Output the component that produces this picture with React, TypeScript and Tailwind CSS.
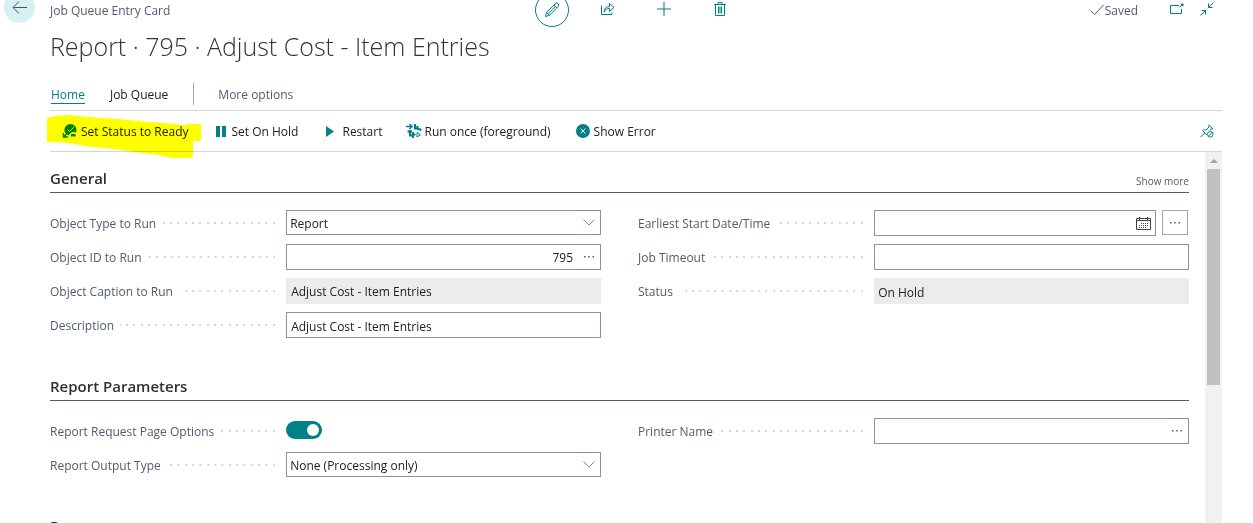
import { useState, type ReactNode } from 'react';

const boxClass = 'w-full h-[26px] border border-[#8a93a3] bg-white text-[#212121] outline-none';

function BackIcon() {
  return (
    <svg viewBox="0 0 16 14" className="w-4 h-[14px]" fill="none" stroke="#44545c" strokeWidth="1">
      <path d="M15 7.500H1.500M7 1.500l-6 6 6 6" />
    </svg>
  );
}

function PencilIcon() {
  return (
    <svg viewBox="0 0 16 16" className="w-4 h-4" fill="none" stroke="#008089" strokeWidth="1">
      <path d="M1.500 14.500l1-4.200L11.300 1.700a1.900 1.900 0 0 1 2.800 2.800L5.500 13.300zM2.500 10.300l3 3M10 3l3 3M4 11.800L11.800 4" />
    </svg>
  );
}

function ShareIcon() {
  return (
    <svg viewBox="0 0 16 14" className="w-4 h-[14px]" fill="none" stroke="#008089" strokeWidth="1">
      <path d="M1.500 3.500v9h10.500v-2" />
      <path d="M4 10c.3-3.600 2.200-5.500 5.500-5.500V1.500L14 5.500l-4.500 4v-3C7 6.500 5.300 7.500 4 10z" />
    </svg>
  );
}

function PlusIcon() {
  return (
    <svg viewBox="0 0 14 14" className="w-[14px] h-[14px]" fill="none" stroke="#008089" strokeWidth="1">
      <path d="M7 0v14M0 7h14" />
    </svg>
  );
}

function TrashIcon() {
  return (
    <svg viewBox="0 0 12 14" className="w-3 h-[14px]" fill="none" stroke="#008089" strokeWidth="1">
      <path d="M0 2.500h12M4 2.500v-2h4v2M1.500 2.500v11h9v-11M4.500 4.500v7M6 4.500v7M7.500 4.500v7" />
    </svg>
  );
}

function CheckIcon() {
  return (
    <svg viewBox="0 0 14 12" className="w-[14px] h-3" fill="none" stroke="#505c6d" strokeWidth="1">
      <path d="M.5 6.500l4 4L13.500 1" />
    </svg>
  );
}

function PopOutIcon() {
  return (
    <svg viewBox="0 0 14 12" className="w-[14px] h-3" fill="none" stroke="#008089" strokeWidth="1">
      <path d="M9 2.500H.5v8h11V6M9.500 4.500L12 2" />
      <path d="M11 1h2v2z" fill="#008089" />
    </svg>
  );
}

function CollapseIcon() {
  return (
    <svg viewBox="0 0 14 14" className="w-[14px] h-[14px]" fill="none" stroke="#008089" strokeWidth="1">
      <path d="M13.500.5L8.500 5.500M8.500 1.500v4h4M.5 13.500l5-5M1.500 8.500h4v4" />
    </svg>
  );
}

function ReadyIcon() {
  return (
    <svg viewBox="0 0 15 14" className="w-[15px] h-[14px]">
      <path d="M8.500 0a6 6 0 0 1 6 6.500c0 1-.3 1.700-.6 2.300-1.700-1.300-4-1-5.400.4L6.500 11.500 3 8.500A6 6 0 0 1 8.500 0z" fill="#008089" />
      <path d="M1.500 9v4H6M2 12.500L6 8.500" fill="none" stroke="#008089" strokeWidth="1.500" />
      <path d="M5.500 5.500l2 2L12 3" fill="none" stroke="#fff" strokeWidth=".8" />
      <path d="M8.500 11c1.700-1.600 3.800-1.600 5.500 0l-1 1.800c-1.200-.8-2.300-.8-3.500 0z" fill="#008089" />
    </svg>
  );
}

function PauseIcon() {
  return (
    <svg viewBox="0 0 10 11" className="w-[10px] h-[11px]" fill="#008089">
      <path d="M0 0h4v11H0zM6 0h4v11H6z" />
    </svg>
  );
}

function PlayIcon() {
  return (
    <svg viewBox="0 0 8 11" className="w-2 h-[11px]" fill="#008089">
      <path d="M0 0l8 5.500L0 11z" />
    </svg>
  );
}

function RunOnceIcon() {
  return (
    <svg viewBox="0 0 16 14" className="w-4 h-[14px]" fill="none" stroke="#008089">
      <path d="M0 2.500h6M3.500 0L6 2.500 3.500 5" strokeWidth="1.500" />
      <path d="M9 0v5.500M8 4.500h3.500V2M11 4.500l4.500 1.500M1.500 7.500H6M4 6v5M3 11.500h3M7 8v6M7 10.500h2.500" strokeWidth="2.200" />
      <path d="M11 8.500v4.500l3.500-2.200z" strokeWidth="1" />
    </svg>
  );
}

function ErrorIcon() {
  return (
    <svg viewBox="0 0 14 14" className="w-[14px] h-[14px]">
      <circle cx="7" cy="7" r="7" fill="#008089" />
      <path d="M4.500 4.500l5 5M9.500 4.500l-5 5" stroke="#fff" strokeWidth="1" />
    </svg>
  );
}

function UnpinIcon() {
  return (
    <svg viewBox="0 0 14 14" className="w-[14px] h-[14px]" fill="none" stroke="#008089" strokeWidth="1">
      <path d="M.5 13L4.500 9M6.500 11L2.500 6.500c1.300-1 2.700-1 3.700-.5L9 3V.8L13 5h-2.200L9.500 6.500" />
      <circle cx="10.300" cy="10.300" r="2.800" />
      <path d="M8.300 12.300l4-4" />
    </svg>
  );
}

function CalendarIcon() {
  return (
    <svg viewBox="0 0 15 13" className="w-[15px] h-[13px]" fill="none" stroke="#3c4452" strokeWidth="1">
      <path d="M.5 1.500h14v11H.5zM.5 3.500h14M3.500 0v3M11.500 0v3" />
      <path d="M5 6.500h8M3 8.500h10M3 10.500h8" strokeDasharray="1 1" />
    </svg>
  );
}

function DotsIcon() {
  return (
    <svg viewBox="0 0 12 2" className="w-3 h-[2px]" fill="#505c6d">
      <path d="M1 0h1.500v1.500H1zM5.200 0h1.500v1.500H5.200zM9.500 0H11v1.500H9.500z" />
    </svg>
  );
}

function Action({ icon, label, className }: { icon: ReactNode; label: string; className: string }) {
  return (
    <button className={`flex items-center whitespace-nowrap text-[#212121] ${className}`}>
      {icon}
      <span className="pt-[2px]">{label}</span>
    </button>
  );
}

function Field({ id, label, children }: { id: string; label: string; children: ReactNode }) {
  return (
    <div className="flex h-[26px]">
      <div className="w-3/7 shrink-0 flex items-center pr-[11px]">
        <label htmlFor={id} className="pt-[2px] whitespace-nowrap text-[#505c6d]">{label}</label>
        <span className="ml-[6px] flex-1 h-[2px] bg-right bg-repeat-x bg-size-[22px_2px] bg-[linear-gradient(90deg,transparent_5px,#d3d5d9_5px,#d3d5d9_7px,transparent_7px,transparent_12px,#d3d5d9_12px,#d3d5d9_14px,transparent_14px,transparent_20px,#d3d5d9_20px)]" />
      </div>
      <div className="relative flex-1 flex items-start">{children}</div>
    </div>
  );
}

function SelectBox({ id, options }: { id: string; options: string[] }) {
  return (
    <>
      <select id={id} className="w-full h-[25px] border border-[#8a93a3] bg-white text-[#212121] appearance-none pt-[2px] pl-[3px] pr-6 outline-none">
        {options.map((option) => (
          <option key={option}>{option}</option>
        ))}
      </select>
      <svg viewBox="0 0 12 7" className="absolute right-[6px] top-[9px] w-3 h-[7px] pointer-events-none" fill="none" stroke="#7c8593">
        <path d="M.5.5L6 6 11.500.5" />
      </svg>
    </>
  );
}

function Section({ title, more, children }: { title: string; more?: boolean; children?: ReactNode }) {
  return (
    <section className="mb-[38px]">
      <div className="flex items-center justify-between border-b border-[#505c6d] h-[25px]">
        <h2 className="pb-[5px] text-[15px] leading-5 font-semibold text-[#2b2f36]">{title}</h2>
        {more && <button className="pt-px text-[10px] text-[#505c6d]">Show more</button>}
      </div>
      <div className="mt-[17px] grid grid-cols-2 gap-x-[37px] items-start">{children}</div>
    </section>
  );
}

export default function App() {
  const [requestOptions, setRequestOptions] = useState(true);
  const [objectId, setObjectId] = useState('795');
  const [description, setDescription] = useState('Adjust Cost - Item Entries');

  return (
    <div className="h-screen overflow-hidden flex flex-col bg-white pr-[31px] text-[12px] leading-5 font-['Open_Sans','Noto_Sans',sans-serif]">
      <header className="flex items-center h-5 shrink-0 pl-1">
        <button aria-label="Back" className="mb-[6px] mr-[15px] w-[31px] h-[31px] shrink-0 rounded-full bg-[#d9f0f2] flex items-center justify-center">
          <BackIcon />
        </button>
        <div className="flex-1 grid grid-cols-[1fr_auto_1fr] items-center">
          <span className="pt-[2px] text-[#505c6d]">Job Queue Entry Card</span>
          <div className="flex items-center gap-[22px] h-5">
            <button aria-label="Edit" className="w-[34px] h-[34px] rounded-full border border-[#008089] flex items-center justify-center">
              <PencilIcon />
            </button>
            <button aria-label="Share" className="w-[34px] pb-[2px] flex justify-center"><ShareIcon /></button>
            <button aria-label="New" className="w-[34px] pb-[2px] flex justify-center"><PlusIcon /></button>
            <button aria-label="Delete" className="w-[34px] pb-[2px] flex justify-center"><TrashIcon /></button>
          </div>
          <div className="flex items-center justify-end pr-2">
            <CheckIcon />
            <span className="ml-px pt-[2px] text-[#505c6d]">Saved</span>
            <button aria-label="Open in new window" className="ml-8 pb-[2px]"><PopOutIcon /></button>
            <button aria-label="Collapse" className="ml-4 pb-[2px]"><CollapseIcon /></button>
          </div>
        </div>
      </header>

      <div className="shrink-0 pl-[50px]">
        <h1 className="mt-2 text-[25px] leading-9 font-light text-[#333]">Report · 795 · Adjust Cost - Item Entries</h1>

        <nav className="mt-[19px] h-[22px] flex items-center">
          <a href="#home" className="mt-[2px] leading-4 mx-px border-b border-[#008089] text-[#008089]">Home</a>
          <a href="#queue" className="pt-[2px] ml-6 text-[#212121]">Job Queue</a>
          <span className="ml-[25px] mr-6 w-px h-[22px] bg-[#a0a5ae]" />
          <a href="#more" className="pt-[2px] text-[#505c6d]">More options</a>
        </nav>

        <div className="mt-[5px] h-[42px] border-y border-[#d2d4d9] flex items-center justify-between pr-2">
          <div className="flex items-center">
            <div className="relative">
              <Action icon={<ReadyIcon />} label="Set Status to Ready" className="gap-1 pl-3" />
              <svg viewBox="0 0 154 45" className="absolute -left-[3px] -top-[5px] w-[154px] h-[45px] mix-blend-multiply pointer-events-none">
                <path d="M0 3L9 1 22 0l20 2 30 2 30 3 28 2 8 2v-2h16v17h-8v16l-2 1h-19l-14-3-24-3-20-3-30-3-14-3L0 27z" fill="#ffff00" />
              </svg>
            </div>
            <Action icon={<PauseIcon />} label="Set On Hold" className="ml-[27px] gap-[6px]" />
            <Action icon={<PlayIcon />} label="Restart" className="ml-7 gap-2" />
            <Action icon={<RunOnceIcon />} label="Run once (foreground)" className="ml-6 gap-[2px]" />
            <Action icon={<ErrorIcon />} label="Show Error" className="ml-[25px] gap-1" />
          </div>
          <button aria-label="Unpin actions"><UnpinIcon /></button>
        </div>
      </div>

      <div className="flex-1 min-h-0 flex">
        <main className="flex-1 min-w-0 overflow-hidden pl-[50px] pr-4 pt-4">
          <Section title="General" more>
            <div className="flex flex-col gap-2">
              <Field id="type" label="Object Type to Run">
                <SelectBox id="type" options={['Report', 'Codeunit']} />
              </Field>
              <Field id="object" label="Object ID to Run">
                <input id="object" value={objectId} onChange={(e) => setObjectId(e.target.value)} className={`${boxClass} pt-px text-right pr-[27px]`} />
                <button aria-label="Look up object" className="absolute right-[6px] top-3"><DotsIcon /></button>
              </Field>
              <Field id="caption" label="Object Caption to Run">
                <input id="caption" readOnly value="Adjust Cost - Item Entries" className="w-full h-[26px] bg-[#ebecee] text-[#212121] pt-px px-[5px] outline-none" />
              </Field>
              <Field id="description" label="Description">
                <input id="description" value={description} onChange={(e) => setDescription(e.target.value)} className={`${boxClass} pt-[2px] px-1`} />
              </Field>
            </div>
            <div className="flex flex-col gap-2">
              <Field id="start" label="Earliest Start Date/Time">
                <div className="relative flex-1">
                  <input id="start" className={`${boxClass} pl-1 pr-7`} />
                  <button aria-label="Pick a date" className="absolute right-[5px] top-[7px]"><CalendarIcon /></button>
                </div>
                <button aria-label="Pick date and time" className="ml-[6px] mr-px w-[26px] h-[25px] border border-[#a6a6a6] flex items-center justify-center">
                  <DotsIcon />
                </button>
              </Field>
              <Field id="timeout" label="Job Timeout">
                <input id="timeout" className={`${boxClass} px-1`} />
              </Field>
              <Field id="status" label="Status">
                <input id="status" readOnly value="On Hold" className="w-full h-[26px] bg-[#ebecee] text-[#212121] pt-[2px] px-1 outline-none" />
              </Field>
            </div>
          </Section>

          <Section title="Report Parameters">
            <div className="flex flex-col gap-2">
              <Field id="options" label="Report Request Page Options">
                <input
                  id="options"
                  type="checkbox"
                  role="switch"
                  checked={requestOptions}
                  onChange={(e) => setRequestOptions(e.target.checked)}
                  className="appearance-none mt-[3px] w-9 h-[18px] rounded-full bg-[#8a93a3] checked:bg-[#008089] flex items-center justify-start checked:justify-end px-[3px] before:content-[''] before:w-3 before:h-3 before:rounded-full before:bg-white"
                />
              </Field>
              <Field id="output" label="Report Output Type">
                <SelectBox id="output" options={['None (Processing only)', 'PDF', 'Excel', 'Word']} />
              </Field>
            </div>
            <Field id="printer" label="Printer Name">
              <input id="printer" className={`${boxClass} pl-1 pr-6`} />
              <button aria-label="Look up printer" className="absolute right-[6px] top-3"><DotsIcon /></button>
            </Field>
          </Section>

          <Section title="Recurrence" />
        </main>

        <div className="w-[17px] shrink-0 bg-[#f1f1f1] px-[2px] flex flex-col">
          <div className="h-[17px] shrink-0 flex items-center justify-center">
            <svg viewBox="0 0 8 4" className="w-2 h-1" fill="#a3a3a3"><path d="M4 0l4 4H0z" /></svg>
          </div>
          <div className="h-7/12 bg-[#c1c1c1]" />
        </div>
      </div>
    </div>
  );
}
